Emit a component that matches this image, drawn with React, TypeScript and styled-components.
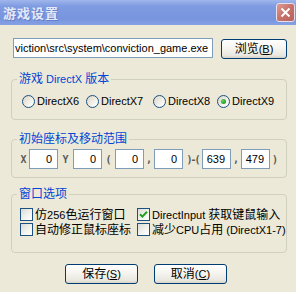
import styled, { createGlobalStyle } from "styled-components";

const Global = createGlobalStyle`
	html, body {
		margin: 0;
		padding: 0;
		background: #ece9d8;
	}
	body {
		font-family: "Liberation Sans", "Noto Sans CJK SC", sans-serif;
		font-size: 12px;
		color: #000;
	}
`;

const Window = styled.div`
	width: 296px;
	height: 292px;
	background: #ece9d8;
	display: flex;
	flex-direction: column;
	overflow: hidden;
`;

const TitleBar = styled.div`
	height: 25px;
	flex: none;
	display: flex;
	align-items: center;
	justify-content: space-between;
	padding: 0 1px 0 3px;
	background: linear-gradient(#a0b7ec, #7f9be1 25%, #7794de 75%, #86a1e3);
`;

const Title = styled.span`
	font-family: "Noto Sans CJK SC", sans-serif;
	font-weight: bold;
	font-size: 13px;
	letter-spacing: 1px;
	color: #e4eaf8;
	text-shadow: 1px 1px 0 #6580c8;
`;

const CloseBtn = styled.div`
	width: 19px;
	height: 19px;
	box-sizing: border-box;
	border: 1px solid #e8e0e8;
	border-radius: 3px;
	background: linear-gradient(135deg, #dc9c94, #c8706a 50%, #b8605c);
	display: flex;
	align-items: center;
	justify-content: center;
`;

const Body = styled.div`
	padding: 13px 9px 0 11px;
	display: flex;
	flex-direction: column;
`;

const PathRow = styled.div`
	display: flex;
	align-items: flex-start;
	gap: 8px;
	padding-left: 2px;
`;

const TextBox = styled.input<{ $w: number; $align?: string }>`
	width: ${(p) => p.$w}px;
	height: 20px;
	box-sizing: border-box;
	border: 1px solid #7f9db9;
	background: #fff;
	font-family: "Liberation Sans", sans-serif;
	font-size: 11px;
	color: #000;
	margin: 0;
	padding: ${(p) => (p.$align === "right" ? "0 5px 0 0" : "0 0 0 1px")};
	text-align: ${(p) => p.$align || "left"};
	outline: none;
`;

const Button = styled.button<{ $w: number }>`
	width: ${(p) => p.$w}px;
	height: 20px;
	box-sizing: border-box;
	margin: 0;
	padding: 0;
	border: 1px solid #003c74;
	border-radius: 3px;
	background: linear-gradient(#ffffff, #f5f4ef 45%, #e9e7df 85%, #d8d3c8);
	font-family: "Liberation Sans", "Noto Sans CJK SC", sans-serif;
	font-size: 12px;
	line-height: 18px;
	color: #000;
`;

const Group = styled.fieldset<{ $mt: number; $pt: number; $pb: number }>`
	margin: ${(p) => p.$mt}px 0 0;
	padding: ${(p) => p.$pt}px 4px ${(p) => p.$pb}px;
	border: 1px solid #d0d0bf;
	border-radius: 4px;
	min-width: 0;
`;

const Legend = styled.legend`
	font-size: 12px;
	line-height: 12px;
	color: #0046d5;
	padding: 0 2px;
	margin-left: 1px;
`;

const Lat = styled.span`
	font-size: 11px;
`;

const RadioRow = styled.div`
	display: grid;
	grid-template-columns: 64px 67px 64px auto;
	padding-left: 6px;
	height: 13px;
	align-items: center;
`;

const RadioItem = styled.label`
	display: flex;
	align-items: center;
	gap: 2px;
	font-size: 11px;
	line-height: 13px;
`;

const RadioDot = styled.span<{ $on?: boolean }>`
	width: 13px;
	height: 13px;
	box-sizing: border-box;
	border-radius: 50%;
	border: 1px solid #1c5180;
	background: linear-gradient(135deg, #d9d5c7, #f3f2ec 60%, #ffffff);
	display: flex;
	align-items: center;
	justify-content: center;
	&::after {
		content: "";
		display: ${(p) => (p.$on ? "block" : "none")};
		width: 5px;
		height: 5px;
		border-radius: 50%;
		background: radial-gradient(circle at 35% 35%, #5fd35f, #21a121 70%);
	}
`;

const CoordRow = styled.div`
	display: flex;
	align-items: center;
	padding-left: 2px;
	height: 20px;
`;

const Sep = styled.span<{ $w: number; $tight?: boolean }>`
	width: ${(p) => p.$w}px;
	flex: none;
	text-align: center;
	font-family: "DejaVu Sans Mono", monospace;
	font-size: 10px;
	font-weight: bold;
	letter-spacing: ${(p) => (p.$tight ? "-2px" : "0")};
	color: #5a5a5a;
`;

const CheckGrid = styled.div`
	display: grid;
	grid-template-columns: 117px auto;
	grid-auto-rows: 15px;
	padding-left: 4px;
	align-items: center;
`;

const CheckItem = styled.label`
	display: flex;
	align-items: center;
	gap: 2px;
	white-space: nowrap;
	line-height: 14px;
`;

const Box = styled.span`
	width: 13px;
	height: 13px;
	flex: none;
	box-sizing: border-box;
	border: 1px solid #1c5180;
	background: linear-gradient(135deg, #dcdcd6, #f4f4f0 60%, #ffffff);
	display: flex;
	align-items: center;
	justify-content: center;
`;

const ButtonRow = styled.div`
	display: flex;
	justify-content: center;
	gap: 16px;
	margin-top: 11px;
	padding-right: 6px;
`;

function Check({ on, children }: { on?: boolean; children: React.ReactNode }) {
	return (
		<CheckItem>
			<Box>
				{on && (
					<svg width="9" height="9" viewBox="0 0 9 9">
						<path d="M1 4.2 L3.4 6.6 L8 1.8" stroke="#21a121" strokeWidth="2" fill="none" />
					</svg>
				)}
			</Box>
			<span>{children}</span>
		</CheckItem>
	);
}

function Radio({ on, label }: { on?: boolean; label: string }) {
	return (
		<RadioItem>
			<RadioDot $on={on} />
			<span>{label}</span>
		</RadioItem>
	);
}

function App() {
	return (
		<Window>
			<Global />
			<TitleBar>
				<Title>游戏设置</Title>
				<CloseBtn>
					<svg width="11" height="11" viewBox="0 0 11 11">
						<path d="M1.5 1.5 L9.5 9.5 M9.5 1.5 L1.5 9.5" stroke="#fff" strokeWidth="2" />
					</svg>
				</CloseBtn>
			</TitleBar>
			<Body>
				<PathRow>
					<TextBox $w={200} readOnly defaultValue="viction\src\system\conviction_game.exe" />
					<Button $w={66} style={{ marginTop: 1 }}>
						浏览<Lat>(<u>B</u>)</Lat>
					</Button>
				</PathRow>

				<Group $mt={14} $pt={10} $pb={11}>
					<Legend>
						游戏<Lat> DirectX </Lat>版本
					</Legend>
					<RadioRow>
						<Radio label="DirectX6" />
						<Radio label="DirectX7" />
						<Radio label="DirectX8" />
						<Radio on label="DirectX9" />
					</RadioRow>
				</Group>

				<Group $mt={13} $pt={4} $pb={8}>
					<Legend>初始座标及移动范围</Legend>
					<CoordRow>
						<Sep $w={11}>X</Sep>
						<TextBox $w={29} $align="right" readOnly defaultValue="0" />
						<Sep $w={15}>Y</Sep>
						<TextBox $w={29} $align="right" readOnly defaultValue="0" />
						<Sep $w={13}>(</Sep>
						<TextBox $w={29} $align="right" readOnly defaultValue="0" />
						<Sep $w={10}>,</Sep>
						<TextBox $w={29} $align="right" readOnly defaultValue="0" />
						<Sep $w={19} $tight>)-(</Sep>
						<TextBox $w={29} $align="right" readOnly defaultValue="639" />
						<Sep $w={10}>,</Sep>
						<TextBox $w={29} $align="right" readOnly defaultValue="479" />
						<Sep $w={10}>)</Sep>
					</CoordRow>
				</Group>

				<Group $mt={10} $pt={7} $pb={15}>
					<Legend>窗口选项</Legend>
					<CheckGrid>
						<Check>
							仿<Lat>256</Lat>色运行窗口
						</Check>
						<Check on>
							<Lat>DirectInput </Lat>获取键鼠输入
						</Check>
						<Check>自动修正鼠标座标</Check>
						<Check>
							减少<Lat>CPU</Lat>占用<Lat> (DirectX1-7)</Lat>
						</Check>
					</CheckGrid>
				</Group>

				<ButtonRow>
					<Button $w={73}>
						保存<Lat>(<u>S</u>)</Lat>
					</Button>
					<Button $w={73}>
						取消<Lat>(<u>C</u>)</Lat>
					</Button>
				</ButtonRow>
			</Body>
		</Window>
	);
}

export default App;
